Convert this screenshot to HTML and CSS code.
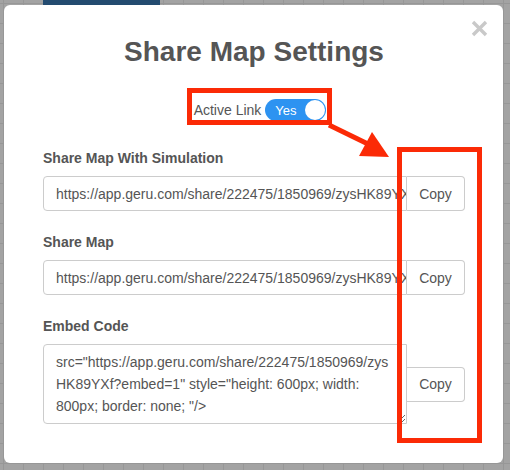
FILE: index.html
```html
<!DOCTYPE html>
<html>
<head>
<meta charset="utf-8">
<link rel="stylesheet" href="styles.css">
</head>
<body>
<div class="canvas-tab"></div>
<div class="modal">
  <button class="close" aria-label="Close">
    <svg width="17" height="17" viewBox="0 0 17 17"><path d="M2 2 L15 15 M15 2 L2 15" stroke="#c9c9c9" stroke-width="3.4" stroke-linecap="butt"/></svg>
  </button>
  <h2 class="title">Share Map Settings</h2>
  <div class="active-row">
    <span class="active-label">Active Link</span>
    <span class="toggle"><span class="toggle-text">Yes</span><span class="knob"></span></span>
  </div>
  <div class="field">
    <label class="field-label">Share Map With Simulation</label>
    <div class="input-group">
      <input class="url-input" type="text" readonly value="https://app.geru.com/share/222475/1850969/zysHK89YXf">
      <button class="copy-btn">Copy</button>
    </div>
  </div>
  <div class="field">
    <label class="field-label">Share Map</label>
    <div class="input-group">
      <input class="url-input" type="text" readonly value="https://app.geru.com/share/222475/1850969/zysHK89YXf">
      <button class="copy-btn">Copy</button>
    </div>
  </div>
  <div class="field">
    <label class="field-label">Embed Code</label>
    <div class="input-group">
      <textarea class="embed-input" readonly>src="https://app.geru.com/share/222475/1850969/zys
HK89YXf?embed=1" style="height: 600px; width:
800px; border: none; "/></textarea>
      <button class="copy-btn">Copy</button>
    </div>
  </div>
</div>
<svg class="annotations" width="510" height="470" viewBox="0 0 510 470">
  <rect x="189.5" y="90.5" width="140" height="32" fill="none" stroke="#fb2a06" stroke-width="5"/>
  <line x1="329" y1="125" x2="368" y2="144" stroke="#fb2a06" stroke-width="5"/>
  <polygon points="372,132 359,156 389,157" fill="#fb2a06"/>
  <rect x="399.5" y="149.5" width="80" height="291" fill="none" stroke="#fb2a06" stroke-width="5"/>
</svg>
</body>
</html>
```
FILE: styles.css
```css
html, body {
  margin: 0;
  padding: 0;
}
body {
  width: 510px;
  height: 470px;
  overflow: hidden;
  position: relative;
  background-color: #a3a3a3;
  background-image:
    linear-gradient(to right, #979797 1px, transparent 1px),
    linear-gradient(to bottom, #979797 1px, transparent 1px);
  background-size: 20px 20px;
  background-position: 3px 3px;
  font-family: "Liberation Sans", Arial, sans-serif;
}
.canvas-tab {
  margin-left: 43px;
  width: 117px;
  height: 10px;
  background: #234b70;
}
.modal {
  position: absolute;
  left: 4px;
  top: 5px;
  width: 499px;
  height: 458px;
  box-sizing: border-box;
  padding: 31px 38px 0 39px;
  background: #fff;
  border-radius: 6px;
}
.close {
  position: absolute;
  top: 15px;
  right: 15px;
  width: 17px;
  height: 17px;
  padding: 0;
  border: 0;
  background: none;
  display: block;
}
.close svg {
  display: block;
}
.title {
  margin: 0;
  font-size: 28px;
  line-height: 32px;
  font-weight: 700;
  color: #555;
  text-align: center;
}
.active-row {
  margin-top: 31px;
  height: 22px;
  padding-left: 12px;
  display: flex;
  justify-content: center;
  align-items: center;
  gap: 4px;
}
.active-label {
  font-size: 14px;
  color: #555;
}
.toggle {
  width: 61px;
  height: 22px;
  box-sizing: border-box;
  border-radius: 11px;
  background: #2d93f1;
  display: flex;
  align-items: center;
  justify-content: space-between;
  padding: 0 1px 0 10px;
}
.toggle-text {
  color: #fff;
  font-size: 13px;
}
.knob {
  width: 20px;
  height: 20px;
  border-radius: 50%;
  background: #fff;
}
.field {
  margin-top: 27px;
}
.field + .field {
  margin-top: 21px;
}
.field-label {
  display: block;
  font-size: 14px;
  line-height: 20px;
  font-weight: 700;
  color: #555;
  margin-bottom: 8px;
}
.input-group {
  display: flex;
  align-items: center;
}
.url-input {
  width: 364px;
  height: 35px;
  box-sizing: border-box;
  border: 1px solid #ccc;
  border-radius: 4px 0 0 4px;
  padding: 0 0 0 12px;
  font-family: "Liberation Sans", Arial, sans-serif;
  font-size: 14px;
  color: #555;
  background: #fff;
  outline: none;
}
.embed-input {
  width: 364px;
  height: 80px;
  box-sizing: border-box;
  border: 1px solid #ccc;
  border-radius: 4px 0 0 4px;
  padding: 6px 12px;
  font-family: "Liberation Sans", Arial, sans-serif;
  font-size: 14px;
  line-height: 22px;
  color: #555;
  background: #fff;
  overflow: hidden;
  outline: none;
  margin: 0;
}
.copy-btn {
  width: 58px;
  height: 35px;
  box-sizing: border-box;
  border: 1px solid #ccc;
  border-left: 0;
  border-radius: 0 4px 4px 0;
  background: #fff;
  font-family: "Liberation Sans", Arial, sans-serif;
  font-size: 14px;
  color: #555;
  padding: 0;
}
.annotations {
  position: absolute;
  left: 0;
  top: 0;
  pointer-events: none;
}
```
